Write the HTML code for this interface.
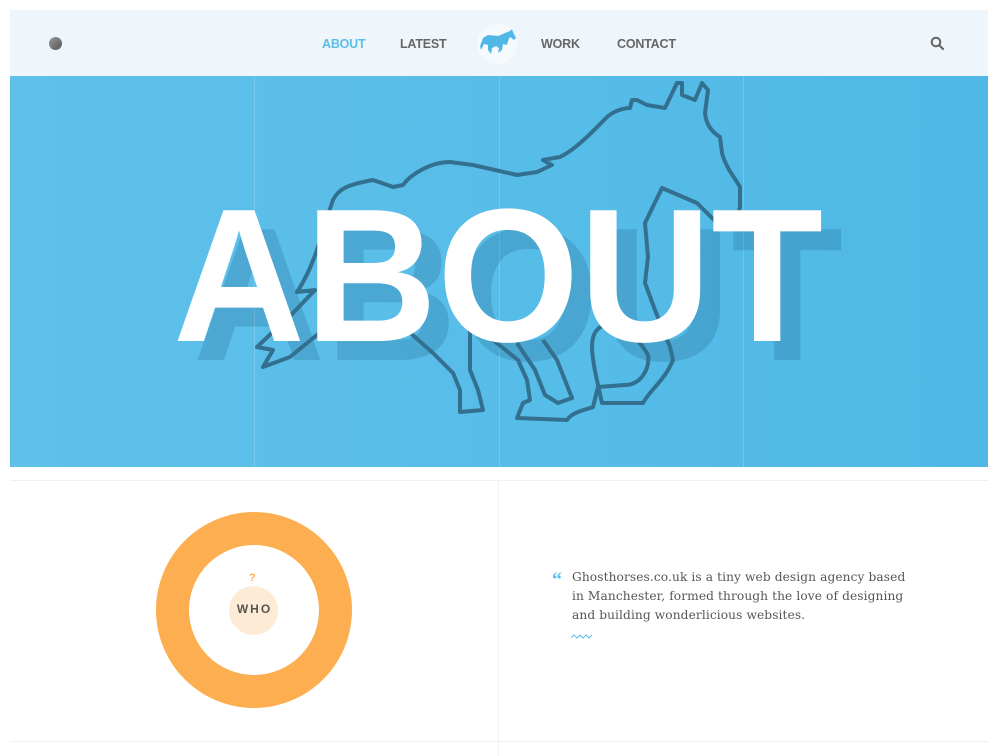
<!DOCTYPE html>
<html><head><meta charset="utf-8"><style>
*{margin:0;padding:0;box-sizing:border-box}
body{width:1000px;height:756px;background:#fff;position:relative;overflow:hidden;font-family:"Liberation Sans",sans-serif}
.hdr{position:absolute;left:10px;top:10px;width:978px;height:66px;background:#eef6fb}
.nav{position:absolute;top:37px;font-size:12.5px;font-weight:bold;color:#666;letter-spacing:-0.2px}
.hero{position:absolute;left:10px;top:76px;width:978px;height:391px;background:linear-gradient(90deg,#5fc1ea,#4fb8e6)}
.col{position:absolute;top:0;width:1px;height:391px;background:rgba(255,255,255,.18)}
.hl{position:absolute;background:#eef1f3}
</style></head><body>
<div class="hdr"></div>
<div style="position:absolute;left:49px;top:37px;width:13px;height:13px;border-radius:50%;background:linear-gradient(135deg,#999,#555)"></div>
<div class="nav" style="left:322px;color:#5bbde8">ABOUT</div>
<div class="nav" style="left:400px">LATEST</div>
<div style="position:absolute;left:477px;top:24px;width:40px;height:40px;border-radius:50%;background:#f6fafd"></div>
<svg style="position:absolute;left:478px;top:28px" width="40" height="30" viewBox="0 0 40 30"><path d="M32,3 L34,1 L35,4 L38,10 L36,12 L32,9 L30,13 L29,17 L25,16 L24,22 L20,25 L21,20 L18,18 L14,20 L13,26 L10,22 L10,17 L6,16 L3,22 L2,18 L5,10 L10,7 L20,8 L27,5 Z" fill="#4fb8e6"/></svg>
<div class="nav" style="left:541px">WORK</div>
<div class="nav" style="left:617px">CONTACT</div>
<svg style="position:absolute;left:930px;top:36px" width="15" height="15" viewBox="0 0 15 15"><circle cx="6" cy="6" r="4.3" fill="none" stroke="#666" stroke-width="2"/><path d="M9,9 L13,13" stroke="#666" stroke-width="2.2" stroke-linecap="round"/></svg>

<div class="hero">
<div class="col" style="left:244px"></div><div class="col" style="left:489px"></div><div class="col" style="left:733px"></div>
</div>
<svg style="position:absolute;left:0;top:0" width="1000" height="470" viewBox="0 0 1000 470">
<text x="193" y="360" font-family="Liberation Sans" font-weight="bold" font-size="190" textLength="650" lengthAdjust="spacingAndGlyphs" fill="rgba(20,80,120,0.2)">ABOUT</text>
<g fill="none" stroke="#33708f" stroke-width="4" stroke-linejoin="round">
<path d="M677,83 L682,83 L682,95 L695,100 L702,83 L708,90 L705,113 C706,125 712,132 720,137 L722,153 C726,168 735,178 740,187 L740,207 C738,218 730,223 717,223 L697,203 L662,188 L645,223 L648,257 L645,283 L655,310 L670,347 L673,360 C665,380 650,390 643,403 L602,403 L598,385 C590,350 588,330 605,325 C620,322 640,340 648,355 C650,370 640,385 625,385 L598,387 L593,407 C585,410 572,412 567,420 L517,418 L523,403 L530,400 L527,380 L518,360 L493,340 L470,330 L470,370 L478,390 L483,410 L460,412 L460,390 L453,373 L433,353 L407,330 L375,330 L323,330 L290,357 L263,367 L273,350 L257,347 L293,313 L315,290 L297,292 C305,280 315,260 323,230 L333,200 C338,190 345,185 373,180 L393,187 L403,185 C410,175 430,162 450,162 L473,165 L517,175 L537,172 L552,165 L543,160 L560,157 C570,152 580,145 607,117 C615,110 625,108 630,108 L632,100 L637,100 L647,105 L665,108 Z"/>
<path d="M517,343 L535,370 L545,395 L558,403 L572,398 L557,360 L543,340"/>
</g>
<text x="173" y="341" font-family="Liberation Sans" font-weight="bold" font-size="190" textLength="650" lengthAdjust="spacingAndGlyphs" fill="#fff">ABOUT</text>
</svg>

<div class="hl" style="left:10px;top:480px;width:978px;height:1px"></div>
<div class="hl" style="left:498px;top:481px;width:1px;height:275px"></div>
<div class="hl" style="left:10px;top:741px;width:978px;height:1px"></div>

<div style="position:absolute;left:156px;top:512px;width:196px;height:196px;border-radius:50%;background:#fcae50"></div>
<div style="position:absolute;left:189px;top:545px;width:130px;height:130px;border-radius:50%;background:#fff"></div>
<div style="position:absolute;left:229px;top:586px;width:49px;height:49px;border-radius:50%;background:#fdebd6"></div>
<div style="position:absolute;left:229px;top:602px;width:49px;text-align:center;font-size:12px;font-weight:bold;letter-spacing:2px;color:#555;padding-left:2px">WHO</div>
<div style="position:absolute;left:249px;top:572px;font-size:11px;font-weight:bold;color:#fcae50">?</div>

<div style="position:absolute;left:552px;top:569px;font-family:'Liberation Serif',serif;font-size:20px;font-weight:bold;color:#5bbde8">“</div>
<div style="position:absolute;left:572px;top:568px;width:360px;font-family:'DejaVu Serif','Liberation Serif',serif;font-size:12.2px;line-height:19px;color:#555;letter-spacing:0.1px">Ghosthorses.co.uk is a tiny web design agency based<br>in Manchester, formed through the love of designing<br>and building wonderlicious websites.</div>
<svg style="position:absolute;left:571px;top:634px" width="22" height="6" viewBox="0 0 22 6"><path d="M0,4 L3,1 L6,4 L9,1 L12,4 L15,1 L18,4 L21,1" fill="none" stroke="#5bbde8" stroke-width="1"/></svg>
</body></html>
